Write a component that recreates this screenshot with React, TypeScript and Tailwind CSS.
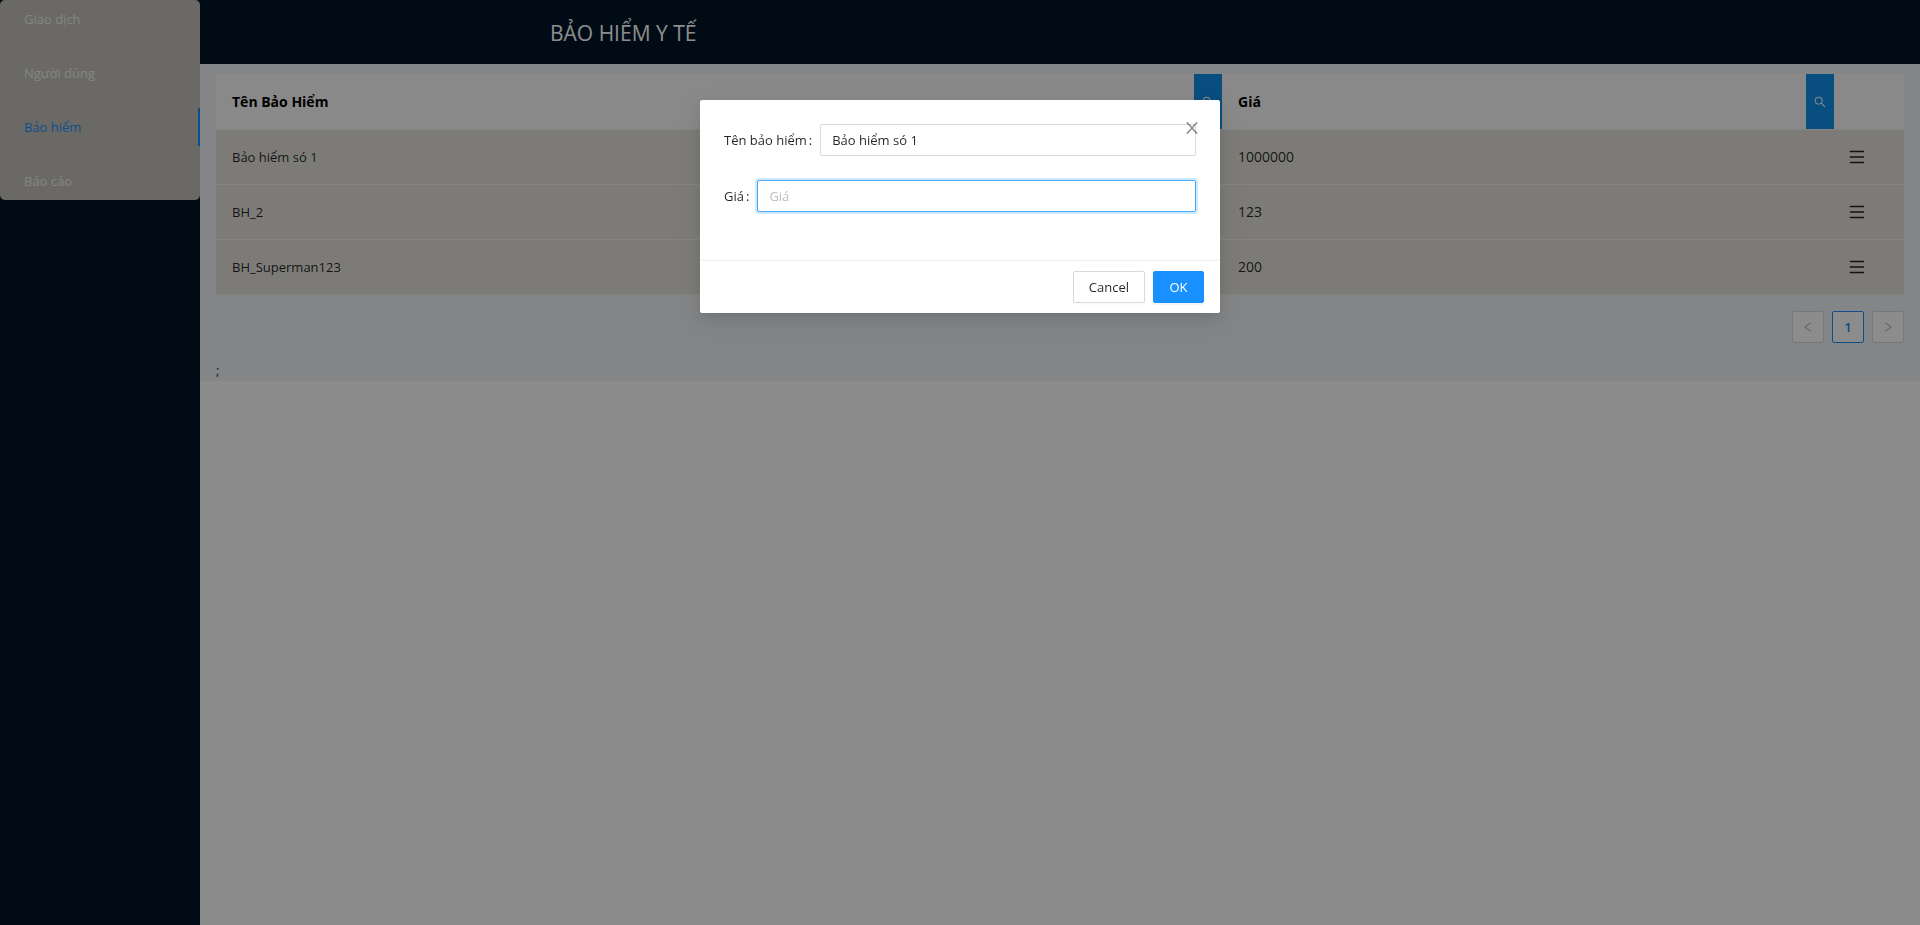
import React from "react";

const menu = ["Giao dịch", "Người dùng", "Bảo hiểm", "Báo cáo"];

const rows = [
  { name: "Bảo hiểm só 1", price: "1000000" },
  { name: "BH_2", price: "123" },
  { name: "BH_Superman123", price: "200" },
];

function SearchIcon() {
  return (
    <svg viewBox="64 64 896 896" className="size-3" fill="currentColor" aria-hidden="true">
      <path d="M909.6 854.5L649.9 594.8C690.2 542.7 712 479 712 412c0-80.2-31.3-155.4-87.9-212.1-56.6-56.7-132-87.9-212.1-87.9s-155.5 31.3-212.1 87.9C143.2 256.5 112 331.8 112 412c0 80.1 31.3 155.5 87.9 212.1C256.5 680.8 331.8 712 412 712c67 0 130.6-21.8 182.7-62l259.7 259.6a8.2 8.2 0 0 0 11.6 0l43.6-43.5a8.2 8.2 0 0 0 0-11.6zM570.4 570.4C528 612.7 471.8 636 412 636s-116-23.3-158.4-65.6C211.3 528 188 471.8 188 412s23.3-116.1 65.6-158.4C296 211.3 352.2 188 412 188s116.1 23.2 158.4 65.6S636 352.2 636 412s-23.3 116.1-65.6 158.4z" />
    </svg>
  );
}

function MenuIcon() {
  return (
    <svg viewBox="64 64 896 896" className="size-4" fill="currentColor" aria-hidden="true">
      <path d="M904 160H120c-4.400 0-8 3.600-8 8v64c0 4.400 3.600 8 8 8h784c4.400 0 8-3.600 8-8v-64c0-4.400-3.600-8-8-8zm0 624H120c-4.400 0-8 3.600-8 8v64c0 4.400 3.600 8 8 8h784c4.400 0 8-3.600 8-8v-64c0-4.400-3.600-8-8-8zm0-312H120c-4.400 0-8 3.600-8 8v64c0 4.400 3.600 8 8 8h784c4.400 0 8-3.600 8-8v-64c0-4.400-3.600-8-8-8z" />
    </svg>
  );
}

function Chevron({ d }: { d: string }) {
  return (
    <svg viewBox="0 0 12 12" className="size-3" fill="none" stroke="currentColor" strokeWidth="1.2" aria-hidden="true">
      <path d={d} />
    </svg>
  );
}

function HeaderCell({ title }: { title: string }) {
  return (
    <th className="h-14 border-b border-[#f0f0f0] p-0 text-left text-sm leading-[22px] font-bold">
      <div className="flex h-[55px] items-center justify-between pl-4">
        <span>{title}</span>
        <button
          aria-label={`Tìm ${title}`}
          className="flex h-full w-7 items-center justify-center bg-[#108ee9] text-white"
        >
          <SearchIcon />
        </button>
      </div>
    </th>
  );
}

function EditDialog() {
  return (
    <div
      role="dialog"
      aria-modal="true"
      aria-label="Bảo hiểm"
      className="relative w-[520px] rounded-xs bg-white shadow-[0_3px_6px_-4px_rgba(0,0,0,0.12),0_6px_16px_0_rgba(0,0,0,0.08),0_9px_28px_8px_rgba(0,0,0,0.05)]"
    >
      <button aria-label="Close" className="absolute top-0 right-0 flex size-14 items-center justify-center text-black/45">
        <svg viewBox="0 0 12 12" className="size-3" fill="none" stroke="currentColor" strokeWidth="1.6" aria-hidden="true">
          <path d="M.8.3l10.400 11.400M11.200.3l-10.400 11.400" />
        </svg>
      </button>
      <form className="flex flex-col gap-6 px-6 pt-6 pb-12">
        <div className="flex items-center gap-2">
          <label htmlFor="name">
            Tên bảo hiểm<span className="ml-0.5">:</span>
          </label>
          <input
            id="name"
            defaultValue="Bảo hiểm só 1"
            className="h-8 min-w-0 flex-1 rounded-xs border border-[#d9d9d9] px-[11px] outline-none"
          />
        </div>
        <div className="flex items-center gap-2">
          <label htmlFor="price">
            Giá<span className="ml-0.5">:</span>
          </label>
          <input
            id="price"
            placeholder="Giá"
            className="h-8 min-w-0 flex-1 rounded-xs border border-[#40a9ff] px-[11px] shadow-[0_0_0_2px_rgba(24,144,255,0.2)] outline-none placeholder:text-[#bfbfbf]"
          />
        </div>
      </form>
      <div className="flex justify-end gap-2 border-t border-[#f0f0f0] px-4 py-[10px]">
        <button className="h-8 rounded-xs border border-[#d9d9d9] bg-white px-[15px] shadow-[0_2px_0_rgba(0,0,0,0.016)]">
          Cancel
        </button>
        <button className="h-8 min-w-[51px] rounded-xs border border-[#1890ff] bg-[#1890ff] px-[15px] text-white shadow-[0_2px_0_rgba(0,0,0,0.043)]">
          OK
        </button>
      </div>
    </div>
  );
}

export default function App() {
  return (
    <div className="flex min-h-screen bg-white font-['Open_Sans',sans-serif] text-[13px] leading-[22px] text-black/85">
      <aside className="w-[200px] shrink-0 bg-[#001529]">
        <nav className="flex flex-col gap-4 overflow-hidden rounded-[5px] bg-[#c2bfb9]">
          {menu.map((label) => (
            <a
              key={label}
              href="#"
              className={
                label === "Bảo hiểm"
                  ? "flex h-[38px] items-center border-r-2 border-[#1890ff] pl-6 text-[#1890ff]"
                  : "flex h-[38px] items-center pl-6 text-[#f0f0f0]"
              }
            >
              {label}
            </a>
          ))}
        </nav>
      </aside>

      <div className="min-w-0 flex-1">
        <header className="flex h-16 items-center bg-[#001529] pl-[350px]">
          <h1 className="pt-0.5 text-[21px] text-white">BẢO HIỂM Y TẾ</h1>
        </header>
        <main className="bg-[#f0f2f5] px-4 pt-[10px]">
          <table className="w-full table-fixed border-separate border-spacing-0">
            <colgroup>
              <col />
              <col className="w-[612px]" />
              <col className="w-[70px]" />
            </colgroup>
            <thead>
              <tr className="bg-[#fafafa] text-black">
                <HeaderCell title="Tên Bảo Hiểm" />
                <HeaderCell title="Giá" />
                <th className="border-b border-[#f0f0f0]" />
              </tr>
            </thead>
            <tbody>
              {rows.map((row) => (
                <tr key={row.name} className="bg-[#e3e0da]">
                  <td className="border-b border-[#f0f0f0] p-4">{row.name}</td>
                  <td className="border-b border-[#f0f0f0] p-4 text-sm leading-[22px]">{row.price}</td>
                  <td className="border-b border-[#f0f0f0] px-[15px] py-0">
                    <button aria-label="Menu" className="flex items-center">
                      <MenuIcon />
                    </button>
                  </td>
                </tr>
              ))}
            </tbody>
          </table>
          <div className="flex justify-end gap-2 py-4">
            <button
              aria-label="Previous"
              disabled
              className="flex size-8 items-center justify-center rounded-xs border border-[#d9d9d9] bg-white text-black/25"
            >
              <Chevron d="M9 1.500L3 6l6 4.500" />
            </button>
            <button className="size-8 rounded-xs border border-[#1890ff] bg-white font-semibold text-[#1890ff]">
              1
            </button>
            <button
              aria-label="Next"
              disabled
              className="flex size-8 items-center justify-center rounded-xs border border-[#d9d9d9] bg-white text-black/25"
            >
              <Chevron d="M3 1.500L9 6l-6 4.500" />
            </button>
          </div>
          <div>;</div>
        </main>
      </div>

      <div className="fixed inset-0 flex items-start justify-center bg-black/45 pt-[100px]">
        <EditDialog />
      </div>
    </div>
  );
}
